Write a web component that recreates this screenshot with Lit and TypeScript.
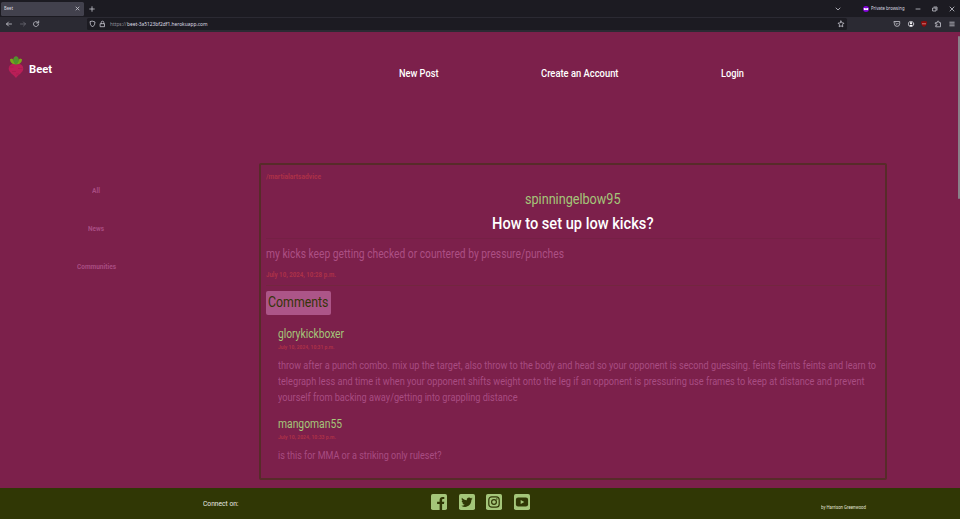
import { LitElement, html, css, svg } from "lit";
import { customElement, property } from "lit/decorators.js";

/** A single line of text condensed or widened to a given width. */
@customElement("fit-line")
class FitLine extends LitElement {
  @property({ type: Number }) width = 0;
  @property() text = "";
  static styles = css`
    :host { display: block; white-space: nowrap; flex: none; }
    .run { display: inline-block; transform-origin: 0 50%; vertical-align: top; }
  `;
  render() {
    return html`<span class="run">${this.text}</span>`;
  }
  updated() {
    const run = this.renderRoot.querySelector(".run") as HTMLElement;
    this.style.width = this.width + "px";
    const fit = () => {
      run.style.transform = "none";
      const natural = run.getBoundingClientRect().width;
      if (natural > 0) run.style.transform = `scaleX(${this.width / natural})`;
    };
    fit();
    document.fonts.ready.then(fit);
  }
}

const line = (cls: string, width: number, text: string) =>
  html`<fit-line class=${cls} .width=${width} .text=${text}></fit-line>`;

const comments = [
  {
    user: "glorykickboxer", userW: 66, date: "July 10, 2024, 10:31 p.m.", dateW: 56.5,
    lines: [
      ["throw after a punch combo. mix up the target, also throw to the body and head so your opponent is second guessing. feints feints feints and learn to", 598],
      ["telegraph less and time it when your opponent shifts weight onto the leg if an opponent is pressuring use frames to keep at distance and prevent", 586.5],
      ["yourself from backing away/getting into grappling distance", 239.5],
    ] as [string, number][],
  },
  {
    user: "mangoman55", userW: 64, date: "July 10, 2024, 10:33 p.m.", dateW: 58,
    lines: [["is this for MMA or a striking only ruleset?", 163.5]] as [string, number][],
  },
];

const socials = [
  svg`<path d="M8.6 16V10H6.100V7.700h2.500V6c0-2 1.200-3.100 3-3.100.9 0 1.700.1 1.700.1v2h-1c-1 0-1.200.6-1.200 1.200v1.500h2.200L12.900 10H11.100v6z"/>`,
  svg`<path d="M13.600 4.500c-.4.200-.9.300-1.300.4.500-.3.800-.7 1-1.300-.5.300-1 .5-1.500.6a2.350 2.350 0 0 0-4 2.150C5.850 6.250 4.100 5.300 2.950 3.850c-.6 1-.3 2.400.75 3.150-.4 0-.75-.1-1.050-.3 0 1.100.8 2.100 1.900 2.350-.35.1-.7.1-1.050 0 .3.950 1.150 1.600 2.200 1.650-1 .8-2.200 1.150-3.450 1C6.700 14.600 12.400 12 12.400 5.850c.5-.4.900-.8 1.200-1.350z"/>`,
  svg`<rect class="line" x="2.800" y="2.800" width="10.400" height="10.400" rx="3"/><circle class="line" cx="8" cy="8" r="2.400"/><circle cx="10.900" cy="5.100" r=".75"/>`,
  svg`<rect x="1.900" y="3.600" width="12.200" height="8.800" rx="2.200"/><path class="tile" d="M6.700 6v4L10.300 8z"/>`,
];

@customElement("app-root")
class AppRoot extends LitElement {
  static styles = css`
    :host {
      display: flex; flex-direction: column; width: 960px; height: 519px; overflow: hidden;
      background: #7c204b; color: #fff; font-family: Roboto, "Open Sans", sans-serif;
    }
    svg { display: block; flex: none; }
    .chrome { font-family: "Noto Sans", sans-serif; font-size: 5px; color: #dcdce2; flex: none; }
    .tabs { height: 17px; background: #1c1b22; display: flex; align-items: center; }
    .tab {
      box-sizing: border-box; width: 83px; height: 14px; margin-left: 1px; padding: 0 4px 1px 3px; border-radius: 1.500px;
      background: #42414d; display: flex; align-items: center; justify-content: space-between;
    }
    .stroke { fill: none; stroke: #c8c8d0; stroke-width: .8; stroke-linecap: round; stroke-linejoin: round; }
    .dim { stroke: #6b6a73; }
    .plus { margin-left: 5px; }
    .chevron { margin-left: auto; margin-right: 22px; }
    .mask { margin-right: 2px; }
    .private { margin-bottom: 1px; }
    .winbuttons { display: flex; gap: 11px; margin: 0 5px 0 11px; }
    .toolbar { box-sizing: border-box; height: 15px; padding-bottom: 1px; background: #2b2a33; display: flex; align-items: center; }
    .nav { display: flex; gap: 5.500px; padding-left: 5px; width: 82px; }
    .address {
      box-sizing: border-box; width: 760px; height: 12px; background: #1c1b22; border-radius: 1.500px;
      display: flex; align-items: center; padding: 0 2px; gap: 3px;
    }
    .url { display: flex; margin-left: 1px; }
    .scheme { color: #8f8f9a; }
    .star { margin-left: auto; }
    .tools { display: flex; gap: 5.700px; margin-left: 46px; }
    header { height: 131px; flex: none; display: flex; justify-content: space-between; }
    .brand { display: flex; padding: 23px 0 0 8px; width: 391px; box-sizing: border-box; }
    .logo { font-size: 11.800px; font-weight: 700; line-height: 28px; margin-left: 5px; }
    .links { display: flex; flex: 1; padding: 34px 0 0 8px; font-size: 10.800px; font-weight: 500; line-height: 16px; }
    .newpost { margin-right: 102px; }
    .create { margin-right: 102.500px; }
    .thumb { width: 2px; height: 163px; margin-top: 4px; background: #8a8089; border-radius: 1px; }
    .page { flex: 1; min-height: 0; display: flex; }
    aside {
      width: 192px; margin-right: 67px; padding-top: 20px; display: flex; flex-direction: column;
      align-items: center; gap: 22px; font-size: 7.200px; font-weight: 700; line-height: 16px; color: #a84c82; flex: none;
    }
    .card {
      box-sizing: border-box; width: 628px; height: 317px; border: 2px solid #572b29;
      border-radius: 2px; padding: 0 5px; display: flex; flex-direction: column; align-items: flex-start;
    }
    .author, .who { padding-top: 1px; margin-bottom: -1px; }
    .community { font-size: 7.300px; font-weight: 700; line-height: 23px; color: #ac3148; }
    .author { align-self: center; font-size: 14.500px; line-height: 22px; color: #a4c679; }
    .title { align-self: center; font-size: 16.500px; font-weight: 500; line-height: 27px; }
    .rule { align-self: stretch; height: 1px; flex: none; background: #752045; margin-top: 1px; }
    .second { background: #73263f; margin-top: 5px; }
    .body { font-size: 12.800px; line-height: 30px; color: #ac4f84; }
    .date { font-size: 7.300px; font-weight: 700; line-height: 11px; color: #ac3148; }
    .heading {
      height: 24px; margin-top: 5px; padding: 0 2px; border-radius: 2px; background: #ac5588; color: #363409;
      font-size: 14.800px; line-height: 23px; flex: none; box-sizing: border-box;
    }
    .comment { padding: 11px 0 0 12px; }
    .comment + .comment { padding-top: 10px; }
    .who { font-size: 12px; line-height: 15px; color: #a4c679; }
    .when { font-size: 6.200px; font-weight: 700; line-height: 12px; margin-bottom: 5px; color: #ac3148; }
    .text { font-size: 11.300px; line-height: 16px; color: #a84c82; }
    footer { height: 31px; flex: none; background: #303705; display: flex; align-items: center; }
    .connect { font-size: 7.500px; margin: 1px 193px 0 202.500px; line-height: 16px; color: #e8e9e2; }
    .socials { display: flex; gap: 11.500px; margin-bottom: 3px; }
    .tile { fill: #a4c679; }
    .glyph { fill: #303705; }
    .glyph .line { fill: none; stroke: #303705; stroke-width: 1.200; }
    .credit { font-size: 5px; margin-left: 291px; margin-top: 6px; line-height: 10px; color: #e0e2d6; }
  `;

  render() {
    return html`
      <div class="chrome">
        <div class="tabs">
          <div class="tab">
            ${line("", 9, "Beet")}
            <svg width="5" height="5"><path class="stroke" d="M1 1l3 3M4 1L1 4"/></svg>
          </div>
          <svg class="plus" width="6" height="6"><path class="stroke" d="M3 .7v4.600M.7 3h4.600"/></svg>
          <svg class="chevron" width="6" height="6"><path class="stroke" d="M1 2l2 2 2-2"/></svg>
          <svg class="mask" width="6" height="6"><circle cx="3" cy="3" r="3" fill="#8000d7"/><path d="M.7 2.200q1.200-.5 2.300.3q1.100-.8 2.300-.3q.1 2-1.200 2Q3.400 4.200 3 3.500q-.4.700-1.100.7Q.6 4.200.7 2.200z" fill="#fff"/></svg>
          ${line("private", 33.5, "Private browsing")}
          <div class="winbuttons">
            <svg width="6" height="6"><path class="stroke" d="M1 3h4"/></svg>
            <svg width="6" height="6"><path class="stroke" d="M1 2h3v3H1zM2 1h3v3"/></svg>
            <svg width="6" height="6"><path class="stroke" d="M1 1l4 4M5 1L1 5"/></svg>
          </div>
        </div>
        <div class="toolbar">
          <div class="nav">
            <svg width="8" height="8"><path class="stroke" d="M6.500 4h-5M3.500 2l-2 2 2 2"/></svg>
            <svg width="8" height="8"><path class="stroke dim" d="M1.500 4h5M4.500 2l2 2-2 2"/></svg>
            <svg width="8" height="8"><path class="stroke" d="M6.500 4.200A2.500 2.500 0 1 1 5.700 2.200M6.700 1v2H4.700"/></svg>
          </div>
          <div class="address">
            <svg width="7" height="8"><path class="stroke" d="M3.500 1.200l2.500.8q.2 3.200-2.500 5Q.8 5.200 1 2z"/></svg>
            <svg width="7" height="8"><path class="stroke" d="M1.500 3.700h4v3h-4zM2.200 3.700V2.500a1.300 1.300 0 0 1 2.600 0v1.200"/></svg>
            <div class="url">
              ${line("scheme", 16.5, "https://")}
              ${line("", 80.5, "beet-3a5123bf2df1.herokuapp.com")}
            </div>
            <svg class="star" width="8" height="8"><path class="stroke" d="M4 1l.9 1.900 2.100.3-1.500 1.500.3 2.100L4 5.800l-1.800 1 .3-2.100L1 3.200l2.100-.3z"/></svg>
          </div>
          <div class="tools">
            <svg width="8" height="8"><path class="stroke" d="M1.300 1.500h5.400v2.200a2.700 2.700 0 0 1-5.400 0zM2.800 3.200L4 4.400l1.200-1.200"/></svg>
            <svg width="8" height="8"><circle class="stroke" cx="4" cy="4" r="2.700"/><circle cx="4" cy="3.200" r="1.100" fill="#fbfbfe"/><path d="M2.300 5.700q1.700-2 3.400 0L4 6.600z" fill="#fbfbfe"/></svg>
            <svg width="8" height="8"><path d="M1 1.500q1.700.2 3-.8 1.300 1 3 .8Q7.100 5.500 4 7 .9 5.500 1 1.500z" fill="#900b0b"/><path d="M2 3.800h4" stroke="#d09a9a" stroke-width=".8"/></svg>
            <svg width="8" height="8"><path class="stroke" d="M1.700 2.700h1.500V2a.9.9 0 0 1 1.800 0v.7h1.500v4.100H1.700V5.500h.6a.8.8 0 0 0 0-1.600h-.6z"/></svg>
            <svg width="8" height="8"><path class="stroke" d="M1.800 2.200h4.400M1.800 4h4.400M1.800 5.800h4.400"/></svg>
          </div>
        </div>
      </div>
      <header>
        <div class="brand">
          <svg width="16" height="24" viewBox="0 0 16 24">
            <path d="M8 10Q1.500 8.500 2.300 4.200 5.500 3.200 8 10zM8 10q6.500-1.500 5.700-5.800Q10.500 3.200 8 10z" fill="#78a51c"/>
            <path d="M8 9Q3 8.500 2 4.200L4 3.500 8 9zM8 9q5-.5 6-4.800L12 3.500z" fill="#78a51c"/>
            <path d="M8 10Q3.500 6 6 2.200L8 1l2 1.200Q12.500 6 8 10z" fill="#52912c"/>
            <path d="M8 10C4.500 7.700.7 10.200.7 13.500c0 4 4.800 6 7.300 9.500 2.500-3.500 7.300-5.500 7.300-9.500C15.300 10.200 11.500 7.700 8 10z" fill="#b91e57"/>
            <path d="M1.500 12h4M10 13.500h4.500M4 16.500h4M8 19h3" stroke="#a01b4c" stroke-width=".6"/>
          </svg>
          ${line("logo", 23, "Beet")}
        </div>
        <div class="links">
          ${line("newpost", 39.5, "New Post")}
          ${line("create", 77.5, "Create an Account")}
          ${line("", 23, "Login")}
        </div>
        <div class="thumb"></div>
      </header>
      <div class="page">
        <aside>
          ${line("", 8, "All")} ${line("", 16, "News")} ${line("", 39, "Communities")}
        </aside>
        <main class="card">
          ${line("community", 55, "/martialartsadvice")}
          ${line("author", 95.5, "spinningelbow95")}
          ${line("title", 161.5, "How to set up low kicks?")}
          <div class="rule"></div>
          ${line("body", 298, "my kicks keep getting checked or countered by pressure/punches")}
          ${line("date", 70, "July 10, 2024, 10:28 p.m.")}
          <div class="rule second"></div>
          <div class="heading">${line("", 60.5, "Comments")}</div>
          ${comments.map((c) => html`
            <section class="comment">
              ${line("who", c.userW, c.user)}
              ${line("when", c.dateW, c.date)}
              ${c.lines.map(([t, w]) => line("text", w, t))}
            </section>`)}
        </main>
      </div>
      <footer>
        ${line("connect", 35.5, "Connect on:")}
        <div class="socials">
          ${socials.map((s) => html`<svg width="16" height="16" viewBox="0 0 16 16">
            <rect class="tile" width="16" height="16" rx="1.800"/><g class="glyph">${s}</g></svg>`)}
        </div>
        ${line("credit", 45, "by Harrison Greenwood")}
      </footer>
    `;
  }
}
